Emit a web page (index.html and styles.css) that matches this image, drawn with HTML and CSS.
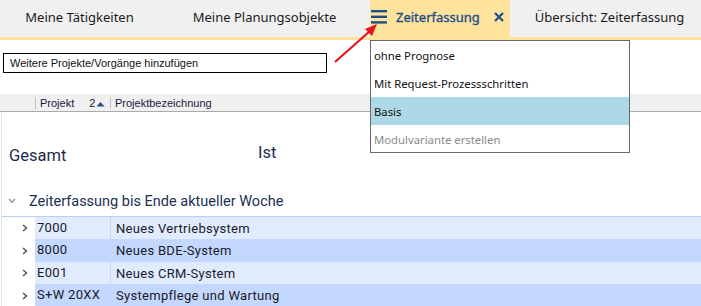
FILE: index.html
```html
<!DOCTYPE html>
<html lang="de">
<head>
    <meta charset="UTF-8">
    <title>Zeiterfassung</title>
    <link rel="stylesheet" href="styles.css">
</head>
<body>
    <header class="tabbar">
        <div class="tab tab-1">Meine Tätigkeiten</div>
        <div class="tab tab-2">Meine Planungsobjekte</div>
        <div class="tab tab-active">
            <svg class="burger" width="16" height="14" viewBox="0 0 16 14">
                <rect x="0" y="0" width="16" height="2.4" fill="#1f4e8c"/>
                <rect x="0" y="5.6" width="16" height="2.4" fill="#1f4e8c"/>
                <rect x="0" y="11.2" width="16" height="2.4" fill="#1f4e8c"/>
            </svg>
            <span class="tab-title">Zeiterfassung</span>
            <svg class="tab-close" width="10" height="10" viewBox="0 0 10 10">
                <path d="M1 1 L9 9 M9 1 L1 9" stroke="#1f4e8c" stroke-width="2.2"/>
            </svg>
        </div>
        <div class="tab tab-4">Übersicht: Zeiterfassung</div>
    </header>

    <main class="content">
        <div class="addbox">Weitere Projekte/Vorgänge hinzufügen</div>

        <div class="colheader">
            <span class="col-indent"></span>
            <span class="col col-projekt">Projekt <span class="sort">2<svg width="9" height="6" viewBox="0 0 9 6"><path d="M0.5 5.5 L4.5 1 L8.5 5.5 Z" fill="#1f4e8c"/></svg></span></span>
            <span class="col col-bez">Projektbezeichnung</span>
        </div>

        <div class="lower">
            <div class="totals">
                <span class="gesamt">Gesamt</span>
                <span class="ist">Ist</span>
            </div>

            <div class="group">
                <svg class="chev-down" width="8" height="6" viewBox="0 0 8 6"><path d="M1 1 L4 4.5 L7 1" fill="none" stroke="#9a9a9a" stroke-width="1.4"/></svg>
                <span>Zeiterfassung bis Ende aktueller Woche</span>
            </div>

            <div class="rows">
                <div class="row">
                    <svg class="chev" width="6" height="8" viewBox="0 0 6 8"><path d="M1 1 L4.5 4 L1 7" fill="none" stroke="#555" stroke-width="1.5"/></svg>
                    <div class="cell cell-nr">7000</div>
                    <div class="cell cell-bez">Neues Vertriebsystem</div>
                </div>
                <div class="row">
                    <svg class="chev" width="6" height="8" viewBox="0 0 6 8"><path d="M1 1 L4.5 4 L1 7" fill="none" stroke="#555" stroke-width="1.5"/></svg>
                    <div class="cell cell-nr">8000</div>
                    <div class="cell cell-bez">Neues BDE-System</div>
                </div>
                <div class="row">
                    <svg class="chev" width="6" height="8" viewBox="0 0 6 8"><path d="M1 1 L4.5 4 L1 7" fill="none" stroke="#555" stroke-width="1.5"/></svg>
                    <div class="cell cell-nr">E001</div>
                    <div class="cell cell-bez">Neues CRM-System</div>
                </div>
                <div class="row">
                    <svg class="chev" width="6" height="8" viewBox="0 0 6 8"><path d="M1 1 L4.5 4 L1 7" fill="none" stroke="#555" stroke-width="1.5"/></svg>
                    <div class="cell cell-nr">S+W 20XX</div>
                    <div class="cell cell-bez">Systempflege und Wartung</div>
                </div>
            </div>
        </div>
    </main>

    <!-- Menü des aktiven Tabs -->
    <div class="dropdown">
        <div class="menu-item">ohne Prognose</div>
        <div class="menu-item">Mit Request-Prozessschritten</div>
        <div class="menu-item selected">Basis</div>
        <div class="menu-item disabled">Modulvariante erstellen</div>
    </div>

    <svg class="pointer" width="60" height="50" viewBox="0 0 60 50">
        <path d="M5 42 L40 11" stroke="#e8141c" stroke-width="2.2"/>
        <path d="M47 4 L35 9 L42 16 Z" fill="#e8141c"/>
    </svg>
</body>
</html>
```

FILE: styles.css
```css
body {
    margin: 0;
    padding: 0;
    width: 701px;
    height: 306px;
    overflow: hidden;
    background-color: #ffffff;
    font-family: "Noto Sans", sans-serif;
    position: relative;
}

.tabbar {
    display: flex;
    height: 37px;
    background-color: #f0f0f0;
    border-bottom: 3px solid #fde39b;
}
.tab {
    display: flex;
    align-items: center;
    justify-content: center;
    font-size: 13px;
    color: #1a1a1a;
    padding-bottom: 4px;
    box-sizing: border-box;
}
.tab-1 {
    width: 159px;
}
.tab-2 {
    width: 211px;
}
.tab-active {
    width: 140px;
    background-color: #fde39b;
    justify-content: flex-start;
    padding-left: 1px;
    margin-bottom: -3px;
    height: 40px;
    padding-bottom: 7px;
}
.tab-4 {
    width: 191px;
    padding-left: 8px;
}
.burger {
    margin-right: 9px;
}
.tab-title {
    color: #1f4e8c;
    font-size: 13px;
    -webkit-text-stroke: 0.35px #1f4e8c;
}
.tab-close {
    margin-left: 14px;
}

.content {
    padding-top: 13px;
}
.addbox {
    margin-left: 3px;
    width: 324px;
    height: 20px;
    box-sizing: border-box;
    border: 1px solid #000;
    font-family: "Liberation Sans", Arial, sans-serif;
    font-size: 11px;
    line-height: 18px;
    padding-left: 6px;
    color: #111;
}

.colheader {
    display: flex;
    align-items: center;
    margin-top: 21px;
    height: 17px;
    background-color: #f0f0f0;
    border-bottom: 1px solid #aaaaaa;
    font-family: "Liberation Sans", Arial, sans-serif;
    font-size: 11px;
    color: #1a1a3a;
}
.col-indent {
    width: 35px;
}
.col {
    border-left: 1px solid #c8c0c0;
    height: 12px;
    line-height: 12px;
    padding-left: 4px;
    box-sizing: border-box;
}
.col-projekt {
    width: 75px;
}
.sort {
    margin-left: 12px;
}
.sort svg {
    margin-left: 1px;
}

.lower {
    border-left: 1px solid #e4e4e4;
    margin-left: 1px;
}
.totals {
    display: flex;
    height: 75px;
    font-family: Roboto, sans-serif;
    font-size: 16.5px;
    color: #1a2b4c;
}
.gesamt {
    width: 249px;
    padding-left: 7px;
    padding-top: 34px;
}
.ist {
    padding-top: 31px;
}

.group {
    display: flex;
    align-items: center;
    height: 29px;
    padding-bottom: 1px;
    box-sizing: border-box;
    font-family: Roboto, sans-serif;
    font-size: 14.5px;
    color: #1b2f55;
}
.chev-down {
    margin-left: 6px;
    margin-right: 13px;
}

.rows {
    border-top: 1px solid #b8d0f8;
}
.row {
    display: flex;
    align-items: center;
    height: 22px;
    font-family: Roboto, sans-serif;
    font-size: 13px;
    letter-spacing: 0.3px;
    color: #1a1a2a;
}
.row:nth-child(odd) {
    background-color: #e0ebfd;
    background-image: linear-gradient(#ffffff, #ffffff);
    background-size: 33px 100%;
    background-repeat: no-repeat;
}
.row:nth-child(even) {
    height: 23px;
    background-color: #c4d8fe;
    background-image: linear-gradient(#ffffff, #ffffff);
    background-size: 33px 100%;
    background-repeat: no-repeat;
}
.chev {
    margin-left: 20px;
    margin-right: 7px;
}
.cell-nr {
    width: 73px;
    padding-left: 2px;
    height: 100%;
    line-height: 22px;
    border-right: 1px solid #c4d8fe;
}
.cell-bez {
    padding-left: 5px;
}

.dropdown {
    position: absolute;
    left: 370px;
    top: 40px;
    width: 260px;
    box-sizing: border-box;
    border: 1px solid #666;
    background-color: #fff;
    font-size: 11.3px;
    color: #111;
}
.menu-item {
    height: 28px;
    line-height: 30px;
    padding-left: 3px;
}
.selected {
    background-color: #add8e6;
}
.disabled {
    color: #8a8a8a;
    height: 27px;
}

.pointer {
    position: absolute;
    left: 330px;
    top: 20px;
}
```
